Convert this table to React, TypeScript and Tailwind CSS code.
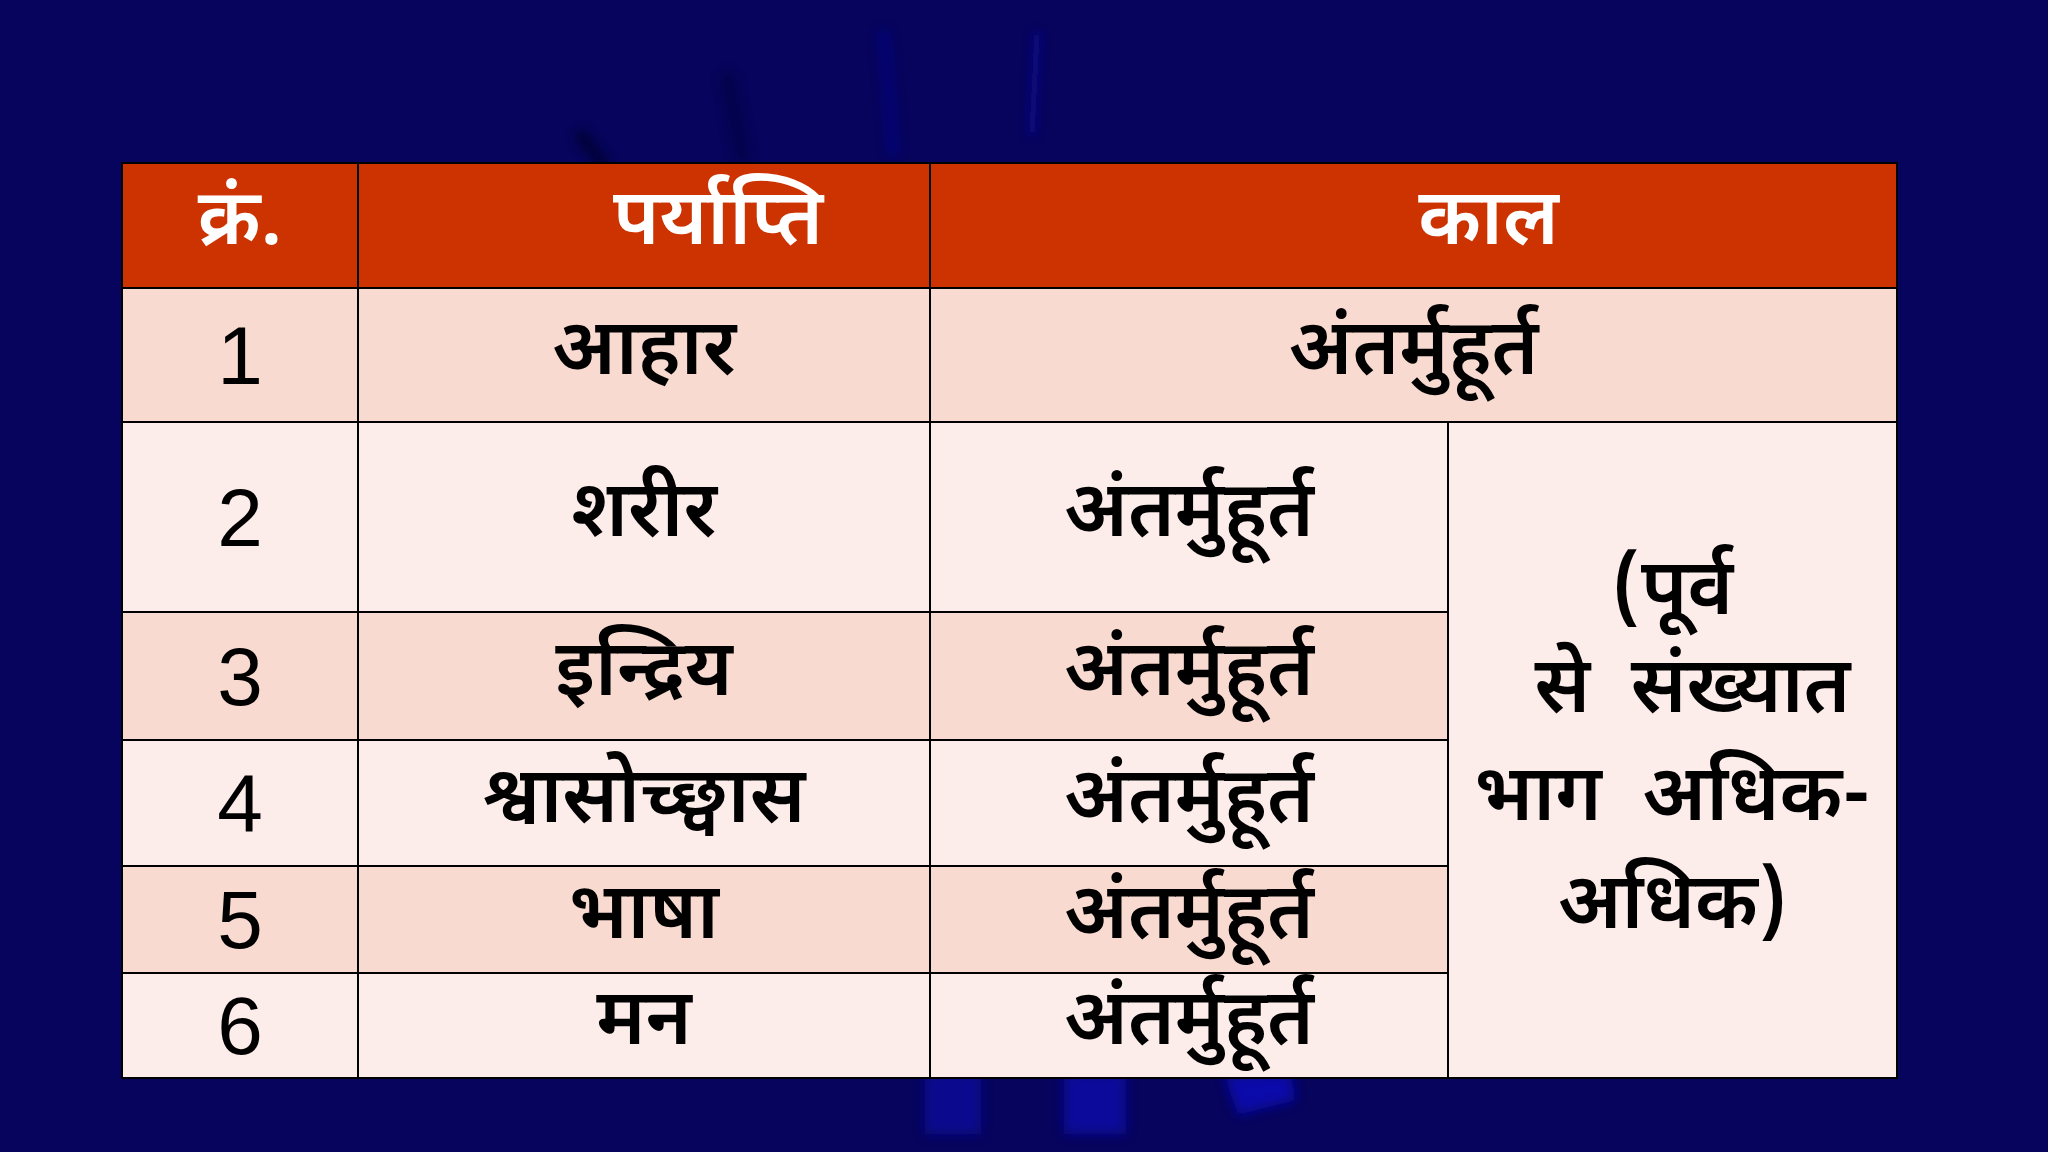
const deva = "font-['Noto_Sans_Devanagari','Noto_Sans','Lohit_Devanagari',sans-serif]";
const num = "font-['Liberation_Sans',Arial,sans-serif]";

const light = "bg-[#fcecea]";
const dark = "bg-[#f8dad0]";

function Backdrop() {
  return (
    <svg className="absolute inset-0 h-full w-full" viewBox="0 0 2048 1152" aria-hidden>
      <defs>
        <filter id="soft" x="-50%" y="-50%" width="200%" height="200%">
          <feGaussianBlur stdDeviation="5" />
        </filter>
        <filter id="softer" x="-50%" y="-50%" width="200%" height="200%">
          <feGaussianBlur stdDeviation="6" />
        </filter>
      </defs>
      <g filter="url(#soft)">
        <path d="M1037 35 L1032 132" stroke="#1818b0" strokeWidth="7" strokeLinecap="round" opacity="0.55" />
        <path d="M884 35 L893 150" stroke="#0f0e96" strokeWidth="14" strokeLinecap="round" opacity="0.35" />
        <path d="M728 80 L742 155" stroke="#03023a" strokeWidth="16" strokeLinecap="round" opacity="0.45" />
        <path d="M582 137 L602 162" stroke="#020228" strokeWidth="14" strokeLinecap="round" opacity="0.65" />
      </g>
      <g filter="url(#softer)" opacity="0.75">
        <rect x="925" y="1072" width="56" height="62" fill="#0a0aa0" />
        <rect x="1064" y="1072" width="62" height="62" fill="#0b0bb0" />
        <path d="M1224 1075 L1290 1072 L1296 1100 L1238 1115 Z" fill="#0a0ac4" />
      </g>
    </svg>
  );
}

export default function App() {
  return (
    <div className="relative h-[1152px] w-[2048px] overflow-hidden bg-[#06045c]">
      <Backdrop />
      <div className="relative pl-[121px] pt-[162px]">
        <div className="grid w-[1777px] grid-cols-[234px_570px_516px_447px] grid-rows-[123px_132px_188px_126px_124px_105px_103px] gap-[2px] border-2 border-black bg-black text-black">
          {/* header */}
          <div className={`flex items-center justify-center bg-[#cc3300] text-[78px] font-semibold text-white ${deva}`}>क्रं.</div>
          <div className={`flex items-center justify-center bg-[#cc3300] pl-[148px] text-[78px] font-semibold text-white ${deva}`}>पर्याप्ति</div>
          <div className={`col-span-2 flex items-center justify-center bg-[#cc3300] pl-[150px] text-[78px] font-semibold text-white ${deva}`}>काल</div>

          {/* row 1 */}
          <div className={`flex items-center justify-center ${dark} text-[82px] ${num}`}>1</div>
          <div className={`flex items-center justify-center ${dark} text-[78px] font-semibold ${deva}`}>आहार</div>
          <div className={`col-span-2 flex items-center justify-center ${dark} text-[78px] font-semibold ${deva}`}>अंतर्मुहूर्त</div>

          {/* row 2 */}
          <div className={`flex items-center justify-center ${light} text-[82px] ${num}`}>2</div>
          <div className={`flex items-center justify-center ${light} text-[78px] font-semibold ${deva}`}>शरीर</div>
          <div className={`flex items-center justify-center ${light} text-[78px] font-semibold ${deva}`}>अंतर्मुहूर्त</div>
          <div className={`row-span-5 flex items-center justify-center ${light} pt-[14px] text-center text-[78px] font-semibold ${deva}`}>
            <p>
              <span className="block leading-[88px]">(पूर्व</span>
              <span className="block pl-[40px] leading-[108px]">से&nbsp;&nbsp;संख्यात</span>
              <span className="block leading-[108px]">भाग&nbsp;&nbsp;अधिक-</span>
              <span className="block leading-[108px]">अधिक)</span>
            </p>
          </div>

          {/* row 3 */}
          <div className={`flex items-center justify-center ${dark} text-[82px] ${num}`}>3</div>
          <div className={`flex items-center justify-center ${dark} text-[78px] font-semibold ${deva}`}>इन्द्रिय</div>
          <div className={`flex items-center justify-center ${dark} text-[78px] font-semibold ${deva}`}>अंतर्मुहूर्त</div>

          {/* row 4 */}
          <div className={`flex items-center justify-center ${light} text-[82px] ${num}`}>4</div>
          <div className={`flex items-center justify-center ${light} text-[78px] font-semibold ${deva}`}>श्वासोच्छ्वास</div>
          <div className={`flex items-center justify-center ${light} text-[78px] font-semibold ${deva}`}>अंतर्मुहूर्त</div>

          {/* row 5 */}
          <div className={`flex items-center justify-center ${dark} text-[82px] ${num}`}>5</div>
          <div className={`flex items-center justify-center ${dark} text-[78px] font-semibold ${deva}`}>भाषा</div>
          <div className={`flex items-center justify-center ${dark} text-[78px] font-semibold ${deva}`}>अंतर्मुहूर्त</div>

          {/* row 6 */}
          <div className={`flex items-center justify-center ${light} text-[82px] ${num}`}>6</div>
          <div className={`flex items-center justify-center ${light} text-[78px] font-semibold ${deva}`}>मन</div>
          <div className={`flex items-center justify-center ${light} text-[78px] font-semibold ${deva}`}>अंतर्मुहूर्त</div>
        </div>
      </div>
    </div>
  );
}
